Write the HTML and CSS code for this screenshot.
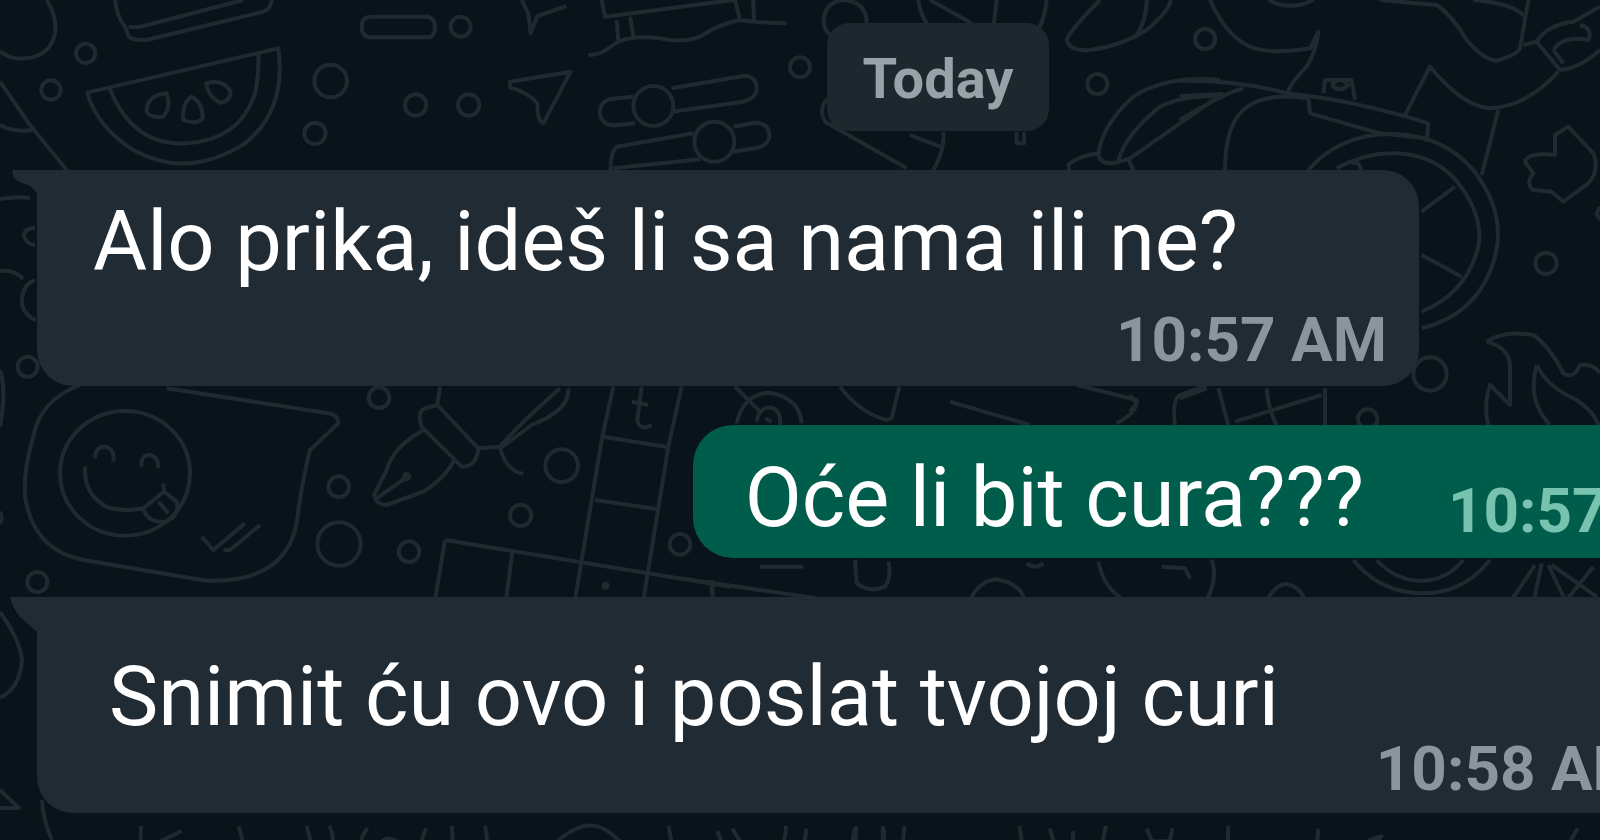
FILE: index.html
```html
<!DOCTYPE html>
<html lang="hr">
<head>
  <meta charset="UTF-8" />
  <meta name="viewport" content="width=device-width, initial-scale=1.0"/>
  <title>Chat</title>
  <link rel="stylesheet" href="styles.css">
</head>
<body>
  <!-- Doodle wallpaper -->
  <svg class="wallpaper" viewBox="0 0 1600 840" preserveAspectRatio="xMinYMin slice" aria-hidden="true">
    <!-- watermelon, small rings -->
    <g transform="scale(.33333)">
      <path d="M140 0Q172 50 165 100Q150 175 60 176Q20 174 0 152M0 245L90 375L200 510M0 375Q40 398 95 390"/>
      <path d="M345 0Q350 50 375 80L385 108Q395 122 440 120L790 35Q815 25 815 0M385 80Q400 85 430 78L730 0"/>
      <path d="M262 278L835 145Q860 330 735 430Q560 540 400 450Q290 380 262 278ZM330 268Q400 440 560 430Q720 420 765 280Q778 220 775 158"/>
      <path d="M500 280Q440 285 440 335Q450 355 490 350Q515 320 500 280ZM575 290Q545 310 550 360Q590 375 608 355Q610 310 575 290ZM618 250Q670 235 692 275Q690 305 660 308Q625 290 618 250Z"/>
      <circle cx="257" cy="160" r="29"/><circle cx="153" cy="270" r="29"/><circle cx="992" cy="243" r="49"/><circle cx="945" cy="400" r="32"/>
      <path d="M1290 50H1115Q1085 50 1085 80Q1085 112 1115 112H1290Q1305 105 1305 80Q1305 50 1275 50"/>
    </g>
    <!-- paper plane, sliders -->
    <g transform="translate(400 0) scale(.33333)">
      <circle cx="182" cy="80" r="30"/><circle cx="47" cy="315" r="32"/><circle cx="206" cy="315" r="32"/><circle cx="1200" cy="202" r="30"/>
      <path d="M365 0L385 40L392 100L412 48L500 18M330 245L512 215L430 370Q412 365 412 310Q390 280 330 262Z"/>
      <path d="M565 165Q600 165 620 148L655 125Q700 105 780 115Q850 130 900 110Q960 70 1020 60Q1100 70 1160 70M605 0L615 50L1000 0M650 60L655 125M690 50L700 108M1005 0L1020 60M1060 0L1062 62"/>
      <circle cx="760" cy="318" r="60"/><circle cx="943" cy="425" r="60"/>
      <path d="M700 290L630 297Q595 310 600 345Q610 380 650 375L705 370M815 265L1030 228Q1070 225 1070 270Q1065 295 1030 305L815 335M880 400L650 440Q630 460 632 510M640 505L900 478M1000 380L1065 368Q1110 370 1108 410Q1100 440 1065 445L1000 455"/>
    </g>
    <!-- shapes around the date -->
    <g transform="translate(800 0) scale(.33333)">
      <path d="M100 110Q60 90 75 40Q85 5 130 0M130 0Q200 5 200 70M355 0Q360 40 380 70M390 0L515 70M590 0L582 70M740 0Q735 50 715 90M95 285Q50 320 75 365L320 505M330 405L420 440M430 395Q435 450 400 510"/>
      <path d="M900 0Q810 90 800 120Q810 155 870 150Q960 140 1040 90Q1110 30 1112 0M1040 0Q1040 60 1010 105M650 395V430H672V395"/>
      <circle cx="892" cy="252" r="30"/><circle cx="1215" cy="117" r="30"/>
      <path d="M895 470Q900 380 1000 290Q1100 225 1260 240M955 480Q980 400 1080 320Q1150 285 1260 288M940 490L990 475L1240 300M895 460Q830 470 805 495L808 510M895 465Q905 495 940 488M985 478L1000 510"/>
    </g>
    <!-- bicycle, fire, star -->
    <g transform="translate(1180 0) scale(.33333)">
      <circle cx="76" cy="117" r="30"/><circle cx="1098" cy="790" r="32"/><circle cx="750" cy="1122" r="50"/><circle cx="563" cy="1257" r="29"/>
      <path d="M90 0Q140 110 210 140Q270 165 390 145L415 95Q410 150 380 200Q330 250 320 285M265 0Q330 35 400 0M0 242Q180 240 320 280Q520 300 745 370L740 425M0 288L130 282M0 360Q130 280 190 265M135 510Q135 380 190 330Q250 275 385 295M385 295L390 340L600 400L740 415M430 280L435 240H515L525 300M455 255Q480 225 505 255Q480 280 455 255"/>
      <path d="M385 510Q480 400 640 402Q790 405 880 510Q980 640 945 770Q900 940 725 985M470 505Q560 455 650 460Q780 465 850 570Q910 660 895 740Q860 880 725 935M725 635L825 560M725 765L845 830M515 490Q535 480 545 510"/>
      <path d="M675 345L750 200Q850 320 930 325Q1040 320 1135 215M955 330L905 525M600 0L770 15Q820 50 860 120Q910 180 950 182Q1010 165 1020 145L1045 0M880 0Q1000 10 1035 50M1030 135L1070 125Q1100 75 1180 65L1260 20M1070 125L1140 210Q1200 205 1260 150M1120 150L1150 190M1120 150Q1150 105 1225 120Q1240 85 1200 75"/>
      <path d="M1165 380L1240 460Q1260 510 1225 550L1150 605L1115 575L1060 570Q1035 550 1060 520L1035 485Q1045 455 1125 465L1125 405Z"/>
      <path d="M920 1025Q970 990 1060 1005Q1110 1040 1150 1120Q1180 1140 1200 1095Q1240 1090 1260 1120M920 1025Q995 1045 990 1110L990 1215L930 1155Q910 1220 925 1275M1070 1095Q1040 1200 1110 1275M1070 1095Q1100 1160 1190 1200Q1250 1240 1260 1290M1260 620L1250 640L1260 660M0 1195L80 1165M115 1165L145 1275M260 1165Q265 1230 290 1275M435 1165L435 1275M165 1265L425 1185"/>
    </g>
    <!-- winking message -->
    <g transform="translate(0 370) scale(.33333)">
      <path d="M240 45Q120 90 100 200Q70 300 75 380Q100 540 250 570L620 632Q880 640 895 420Q910 320 930 240L1015 160Q1015 135 985 130L500 55"/>
      <ellipse cx="375" cy="310" rx="195" ry="187"/>
      <path d="M255 290Q250 380 330 415Q380 425 430 415M285 265Q285 230 315 230Q345 235 340 275M425 290Q420 255 450 255Q475 260 475 295M490 340L492 365L430 415Q440 460 500 455Q540 435 530 395L492 365M475 395L505 430"/>
      <path d="M605 500L640 540L735 460M670 540H690L780 465"/>
      <circle cx="83" cy="-10" r="30"/><circle cx="112" cy="636" r="30"/><circle cx="1016" cy="350" r="31"/><circle cx="1017" cy="522" r="65"/>
      <path d="M0 0Q20 60 0 170M0 425Q10 445 0 460"/>
    </g>
    <!-- pen, film strip -->
    <g transform="translate(350 370) scale(.33333)">
      <circle cx="87" cy="83" r="31"/><circle cx="635" cy="287" r="49"/><circle cx="512" cy="436" r="32"/><circle cx="177" cy="545" r="31"/><circle cx="990" cy="523" r="31"/>
      <path d="M270 50L262 105L385 235Q380 290 335 290L215 170Q200 125 225 115L262 105M220 180Q130 230 110 300L72 375Q80 405 110 405L220 365Q290 320 315 265M80 385L175 318M385 235L450 230Q500 170 630 55M450 230Q465 300 520 312M450 235L545 165Q660 120 655 55"/>
      <circle cx="170" cy="320" r="8"/><circle cx="767" cy="647" r="6"/>
      <path d="M790 50L755 210L675 690M995 50L955 230L880 690M760 200L955 232M735 390L925 418M285 510L1140 650M285 510L255 690M487 545L468 690M1088 640V685M875 50L862 150Q870 185 905 165M845 95L895 105"/>
    </g>
    <g transform="translate(680 370) scale(.33333)">
      <path d="M165 50L240 125M170 160Q190 70 270 68Q360 85 365 160M230 155Q235 115 270 112Q305 120 300 165M255 145L275 155M480 50Q540 130 620 150L635 145L658 50M810 95L1050 165M1190 45L1370 90Q1375 125 1310 160M0 625L410 685M95 630V670M240 590H370M525 570L530 640Q570 670 615 650Q635 620 625 575M870 690Q900 630 950 628Q1020 640 1035 690M1040 580Q1065 600 1090 580M1255 575Q1270 650 1330 690"/>
    </g>
    <g transform="translate(1130 370) scale(.33333)">
      <path d="M0 75L20 100L0 125M135 165Q125 90 150 75L230 45M95 590L165 595L180 625M245 570Q265 620 230 690M410 690Q440 640 470 642Q510 650 525 690M670 570Q750 670 880 670Q1000 670 1080 570M740 570Q800 635 880 632Q950 630 1000 570M1215 585L1145 690M1235 580L1210 700M1255 585L1305 690M1265 585L1400 680M1390 590L1310 690"/>
    </g>
    <!-- left edge -->
    <path d="M0 199Q18 196 30 198M35 228Q24 228 24 236Q26 244 35 245M0 271Q14 269 23 279M35 280Q21 285 22 305Q26 317 36 320M0 612Q20 640 22 660Q20 688 0 698M0 790L19 808H0M42 800Q43 820 52 840"/>
    <!-- bottom edge -->
    <g transform="translate(100 780) scale(.51)">
      <path d="M0 178L160 100M80 90V130L100 180M210 140V180M272 90L295 180M405 90L430 180M450 90Q465 120 445 150V180M525 95Q500 120 515 180M640 95Q620 130 635 180M690 90Q695 150 680 180M755 90Q765 140 750 180M545 180Q540 110 570 115Q600 120 590 180M840 180Q920 80 970 90Q1020 100 1055 180M870 180Q910 130 955 132M990 145V165M1115 90L1130 180M1210 100Q1230 150 1250 180M1240 95Q1270 150 1300 152Q1345 145 1345 90M1385 95Q1380 150 1350 180M1480 95L1465 180M1535 90V130L1568 135"/>
    </g>
    <g transform="translate(800 780) scale(.51)">
      <path d="M110 90Q110 150 90 180M165 95V130L200 138L205 90M280 180L290 135L365 160V180M430 90L445 180M490 95L500 130Q540 140 535 100M600 90L580 180M680 95L690 120H725L730 95M840 90Q835 140 855 180M1015 95Q1020 140 980 155L930 178M1070 180Q1090 120 1140 110L1125 130V180M1525 95L1475 180M1335 175H1360M1568 150L1550 180"/>
    </g>
  </svg>

  <main class="chat">
    <div class="date">Today</div>

    <div class="message received">
      <svg class="tail" viewBox="0 0 28 28" aria-hidden="true"><path d="M3 0H28V28Q26 16 12 13Q0 8 3 0Z"/></svg>
      <p>Alo prika, ideš li sa nama ili ne?</p>
      <time>10:57 AM</time>
    </div>

    <div class="message sent">
      <p>Oće li bit cura???</p>
      <time>10:57 AM</time>
    </div>

    <div class="message received wide">
      <svg class="tail" viewBox="0 0 28 36" aria-hidden="true"><path d="M0 0H28V36L10 20Q2 10 0 0Z"/></svg>
      <p>Snimit ću ovo i poslat tvojoj curi</p>
      <time>10:58 AM</time>
    </div>
  </main>
</body>
</html>
```

FILE: styles.css
```css
body {
  margin: 0;
  min-height: 100vh;
  position: relative;
  overflow: hidden;
  background: #08131a;
  font-family: Roboto, "Liberation Sans", sans-serif;
}
.wallpaper {
  position: absolute;
  top: 0;
  left: 0;
  width: 100%;
  height: 100%;
}
.wallpaper path,
.wallpaper circle,
.wallpaper ellipse {
  fill: none;
  stroke: #20292f;
  stroke-width: 4px;
  stroke-linejoin: round;
  vector-effect: non-scaling-stroke;
}
/* the conversation is wider than the window and runs off its right side */
.chat {
  position: relative;
  display: flex;
  flex-direction: column;
  align-items: flex-start;
  gap: 39px;
  width: calc(100% + 276px);
  box-sizing: border-box;
  padding: 23px 37px;
}
.date {
  align-self: center;
  padding: 24px 36px 20px;
  border-radius: 22px;
  background: #1d272d;
  color: #97a3a9;
  font-size: 56px;
  font-weight: 700;
  line-height: 64px;
}
.message {
  position: relative;
  display: flex;
  box-sizing: border-box;
  color: #fff;
  font-size: 83px;
  line-height: 80px;
  white-space: nowrap;
}
.message p {
  margin: 0;
}
.message time {
  color: #8c959b;
  font-size: 62px;
  font-weight: 700;
  line-height: 64px;
}
.received {
  flex-direction: column;
  gap: 26px;
  padding: 32px 32px 14px 56px;
  border-radius: 0 36px 36px 36px;
  background: #212b33;
}
.received p {
  padding-right: 149px;
}
.received time {
  align-self: flex-end;
}
.sent {
  align-self: flex-end;
  align-items: flex-start;
  gap: 84px;
  margin-right: 88px;
  padding: 33px 32px 15px 52px;
  border-radius: 40px;
  background: #005d4b;
}
.sent time {
  margin-top: 21px;
  color: #78c3b0;
}
.wide {
  gap: 0;
  padding: 60px 32px 12px 72px;
}
.wide p {
  padding-right: 368px;
}
.tail {
  position: absolute;
  top: 0;
  left: -27px;
  width: 28px;
  fill: #212b33;
}
```
